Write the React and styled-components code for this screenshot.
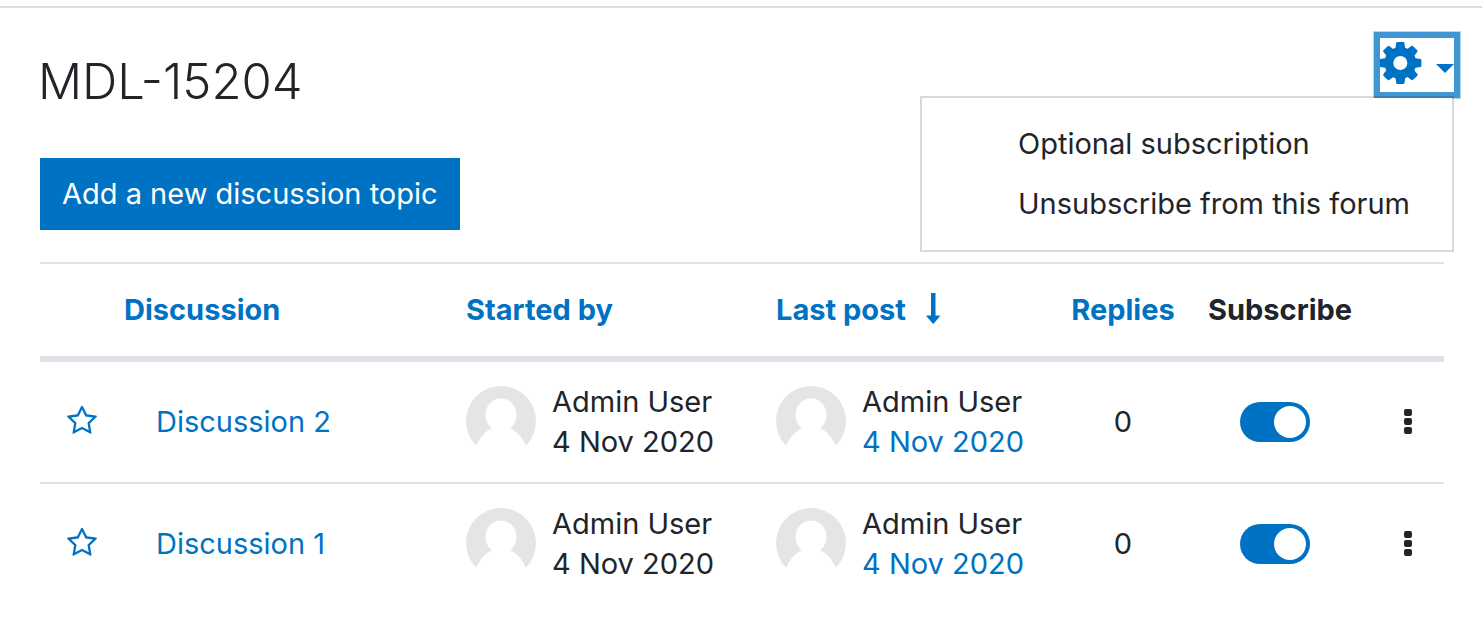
import React, { useState } from "react";
import styled, { createGlobalStyle, css } from "styled-components";

const blue = "#0072c3",
  dark = "#212529",
  line = "#dee2e6";

const GlobalStyle = createGlobalStyle`
  * {
    box-sizing: border-box;
  }
  body {
    margin: 0;
    background: #fff;
    color: ${dark};
    font-family: Inter, "Liberation Sans", sans-serif;
    font-size: 29px;
    line-height: 40px;
  }
  button {
    font: inherit;
    cursor: pointer;
  }
`;
const Page = styled.main`
  margin-top: 6px;
  padding-bottom: 36px;
  border-top: 2px solid #ddd;
`;
const Header = styled.header`
  display: flex;
  justify-content: space-between;
  align-items: flex-start;
  padding: 30px 28px 0 38px;
`;
const Title = styled.h1`
  margin: 0;
  padding-top: 14px;
  font-size: 49px;
  font-weight: 300;
  line-height: 60px;
`;
const Settings = styled.div`
  position: relative;
`;
const SettingsButton = styled.button`
  display: flex;
  align-items: flex-start;
  justify-content: space-between;
  width: 74px;
  height: 54px;
  padding: 4px 0 0;
  border: 0;
  background: #fff;
  color: ${blue};
  box-shadow: 0 0 0 6px #4096d2, 0 0 0 7px #b8d7ee;
`;
const Caret = styled.span`
  margin-top: 22px;
  border: 9px solid transparent;
  border-top-color: ${blue};
  border-bottom: 0;
`;
const Menu = styled.ul`
  position: absolute;
  top: 58px;
  right: 0;
  width: 534px;
  margin: 0;
  padding: 16px 0;
  list-style: none;
  background: #fff;
  background-clip: padding-box;
  border: 2px solid rgba(0, 0, 0, 0.15);
`;
const MenuLink = styled.a`
  display: block;
  padding: 10px 0 10px 96px;
  color: ${dark};
  text-decoration: none;
  white-space: nowrap;
`;
const Content = styled.section`
  padding: 46px 38px 0 40px;
`;
const AddButton = styled.button`
  display: block;
  height: 72px;
  margin-bottom: 32px;
  padding: 0 22px;
  border: 0;
  background: ${blue};
  color: #fff;
`;
const Table = styled.table`
  width: 100%;
  table-layout: fixed;
  border-spacing: 0;
`;
const Col = styled.col`
  width: ${props => props.$width};
`;
const Th = styled.th`
  height: 100px;
  padding: 0;
  ${props =>
    props.$indent &&
    css`
      padding-left: 20px;
    `}
  border-top: 2px solid ${line};
  border-bottom: 6px solid ${line};
  font-weight: 700;
  text-align: ${props => (props.$center ? "center" : "left")};
  white-space: nowrap;
`;
const Row = styled.tr`
  & + & td {
    height: 122px;
    border-top: 2px solid ${line};
  }
`;
const Td = styled.td`
  height: 120px;
  padding: 0;
  ${props =>
    props.$indent &&
    css`
      padding-left: 32px;
    `}
  ${props =>
    props.$menu &&
    css`
      padding-left: 10px;
    `}
  text-align: ${props => (props.$center ? "center" : "left")};
`;
const Link = styled.a`
  color: ${blue};
  text-decoration: none;
`;
const SortLink = styled(Link)`
  display: inline-flex;
  align-items: center;
  gap: 20px;
`;
const Person = styled.div`
  display: flex;
  align-items: center;
  gap: 16px;
  white-space: nowrap;
`;
const PersonText = styled.div`
  display: flex;
  flex-flow: column;
`;
const IconButton = styled.button`
  display: flex;
  margin: 0 auto;
  padding: 0;
  border: 0;
  background: none;
  color: ${props => (props.$dark ? dark : blue)};
`;
const Switch = styled.input`
  appearance: none;
  display: flex;
  justify-content: ${props => (props.checked ? "flex-end" : "flex-start")};
  width: 70px;
  height: 40px;
  margin: 0 auto;
  padding: 4px;
  border-radius: 20px;
  background: ${props => (props.checked ? blue : "#adb5bd")};
  cursor: pointer;
  &::before {
    content: "";
    width: 32px;
    height: 32px;
    border-radius: 50%;
    background: #fff;
  }
`;

const CogIcon = () => (
  <svg width="42" height="42" viewBox="24 128 1536 1536" fill="currentColor">
    <path d="M1024 896q0-106-75-181t-181-75-181 75-75 181 75 181 181 75 181-75 75-181zm512-109v222q0 12-8 23t-20 13l-185 28q-19 54-39 91 35 50 107 138 10 12 10 25t-9 23q-27 37-99 108t-94 71q-12 0-26-9l-138-108q-44 23-91 38-16 136-29 186-7 28-36 28h-222q-14 0-24.500-8.500t-11.500-21.500l-28-184q-49-16-90-37l-141 107q-10 9-25 9-14 0-25-11-126-114-165-168-7-10-7-23 0-12 8-23 15-21 51-66.500t54-70.500q-27-50-41-99l-183-27q-13-2-21-12.500t-8-23.500v-222q0-12 8-23t19-13l186-28q14-46 39-92-40-57-107-138-10-12-10-24 0-10 9-23 26-36 98.500-107.500t94.500-71.500q13 0 26 10l138 107q44-23 91-38 16-136 29-186 7-28 36-28h222q14 0 24.500 8.500t11.500 21.500l28 184q49 16 90 37l142-107q9-9 24-9 13 0 25 10 129 119 165 170 7 8 7 22 0 12-8 23-15 21-51 66.500t-54 70.500q26 50 41 98l183 28q13 2 21 12.500t8 23.500z" />
  </svg>
);
const StarIcon = () => (
  <svg width="32" height="32" viewBox="0 64 1792 1792" fill="currentColor">
    <path d="M1201 1004l306-297-422-62-189-382-189 382-422 62 306 297-73 421 378-199 377 199zm527-357q0 22-26 48l-363 354 86 500q1 7 1 20 0 50-41 50-19 0-40-12l-449-236-449 236q-22 12-40 12-21 0-31.500-14.500t-10.500-35.500q0-6 2-20l86-500-364-354q-25-27-25-48 0-37 56-46l502-73 225-455q19-41 49-41t49 41l225 455 502 73q56 9 56 46z" />
  </svg>
);
const ArrowIcon = () => (
  <svg width="14" height="36" viewBox="0 0 14 36" fill="currentColor">
    <path d="M5 1h4.500v22.500h4q.7.300.2 1L7.800 31.500q-.5.500-1 0L.6 24.500q-.4-.7.200-1H5z" />
  </svg>
);
const DotsIcon = () => (
  <svg width="8" height="26" viewBox="0 0 8 26" fill="currentColor">
    <rect x="0" y="0" width="8" height="7" rx="2" />
    <rect x="0" y="9" width="8" height="7" rx="2" />
    <rect x="0" y="18" width="8" height="7" rx="2" />
  </svg>
);
const Avatar = () => (
  <svg width="70" height="72" viewBox="0 0 70 72">
    <circle cx="35" cy="35" r="35" fill="#e5e5e5" />
    <ellipse cx="35" cy="29" rx="15.500" ry="16.500" fill="#fff" />
    <path
      d="M10 60C14 51 20 44 28 41.500Q35 45 42 41.500C50 44 56 51 60 60V71H10z"
      fill="#fff"
    />
  </svg>
);

const Author = ({ name, date, linked }) => (
  <Person>
    <Avatar />
    <PersonText>
      <span>{name}</span>
      {linked ? <Link href="#post">{date}</Link> : <span>{date}</span>}
    </PersonText>
  </Person>
);

const Discussion = ({ title, name, date, replies }) => {
  const [subscribed, setSubscribed] = useState(true);
  return (
    <Row>
      <Td>
        <IconButton aria-label={`Star ${title}`}>
          <StarIcon />
        </IconButton>
      </Td>
      <Td $indent>
        <Link href="#discussion">{title}</Link>
      </Td>
      <Td>
        <Author name={name} date={date} />
      </Td>
      <Td>
        <Author name={name} date={date} linked />
      </Td>
      <Td $center>{replies}</Td>
      <Td>
        <Switch
          type="checkbox"
          aria-label={`Subscribe to ${title}`}
          checked={subscribed}
          onChange={() => setSubscribed(!subscribed)}
        />
      </Td>
      <Td $menu>
        <IconButton $dark aria-label={`Actions for ${title}`}>
          <DotsIcon />
        </IconButton>
      </Td>
    </Row>
  );
};

const discussions = [
  { title: "Discussion 2", name: "Admin User", date: "4 Nov 2020", replies: 0 },
  { title: "Discussion 1", name: "Admin User", date: "4 Nov 2020", replies: 0 }
];

export default function App() {
  const [open, setOpen] = useState(true);
  return (
    <Page>
      <GlobalStyle />
      <Header>
        <Title>MDL-15204</Title>
        <Settings>
          <SettingsButton
            aria-label="Forum settings"
            aria-expanded={open}
            onClick={() => setOpen(!open)}
          >
            <CogIcon />
            <Caret />
          </SettingsButton>
          {open && (
            <Menu>
              <li>
                <MenuLink href="#optional">Optional subscription</MenuLink>
              </li>
              <li>
                <MenuLink href="#unsubscribe">
                  Unsubscribe from this forum
                </MenuLink>
              </li>
            </Menu>
          )}
        </Settings>
      </Header>
      <Content>
        <AddButton>Add a new discussion topic</AddButton>
        <Table>
          <colgroup>
            <Col $width="84px" />
            <Col $width="auto" />
            <Col $width="310px" />
            <Col $width="282px" />
            <Col $width="130px" />
            <Col $width="174px" />
            <Col $width="82px" />
          </colgroup>
          <thead>
            <tr>
              <Th />
              <Th>
                <Link href="#discussion">Discussion</Link>
              </Th>
              <Th>
                <Link href="#started">Started by</Link>
              </Th>
              <Th>
                <SortLink href="#last">
                  Last post
                  <ArrowIcon />
                </SortLink>
              </Th>
              <Th $center>
                <Link href="#replies">Replies</Link>
              </Th>
              <Th $indent>Subscribe</Th>
              <Th />
            </tr>
          </thead>
          <tbody>
            {discussions.map(item => (
              <Discussion key={item.title} {...item} />
            ))}
          </tbody>
        </Table>
      </Content>
    </Page>
  );
}
